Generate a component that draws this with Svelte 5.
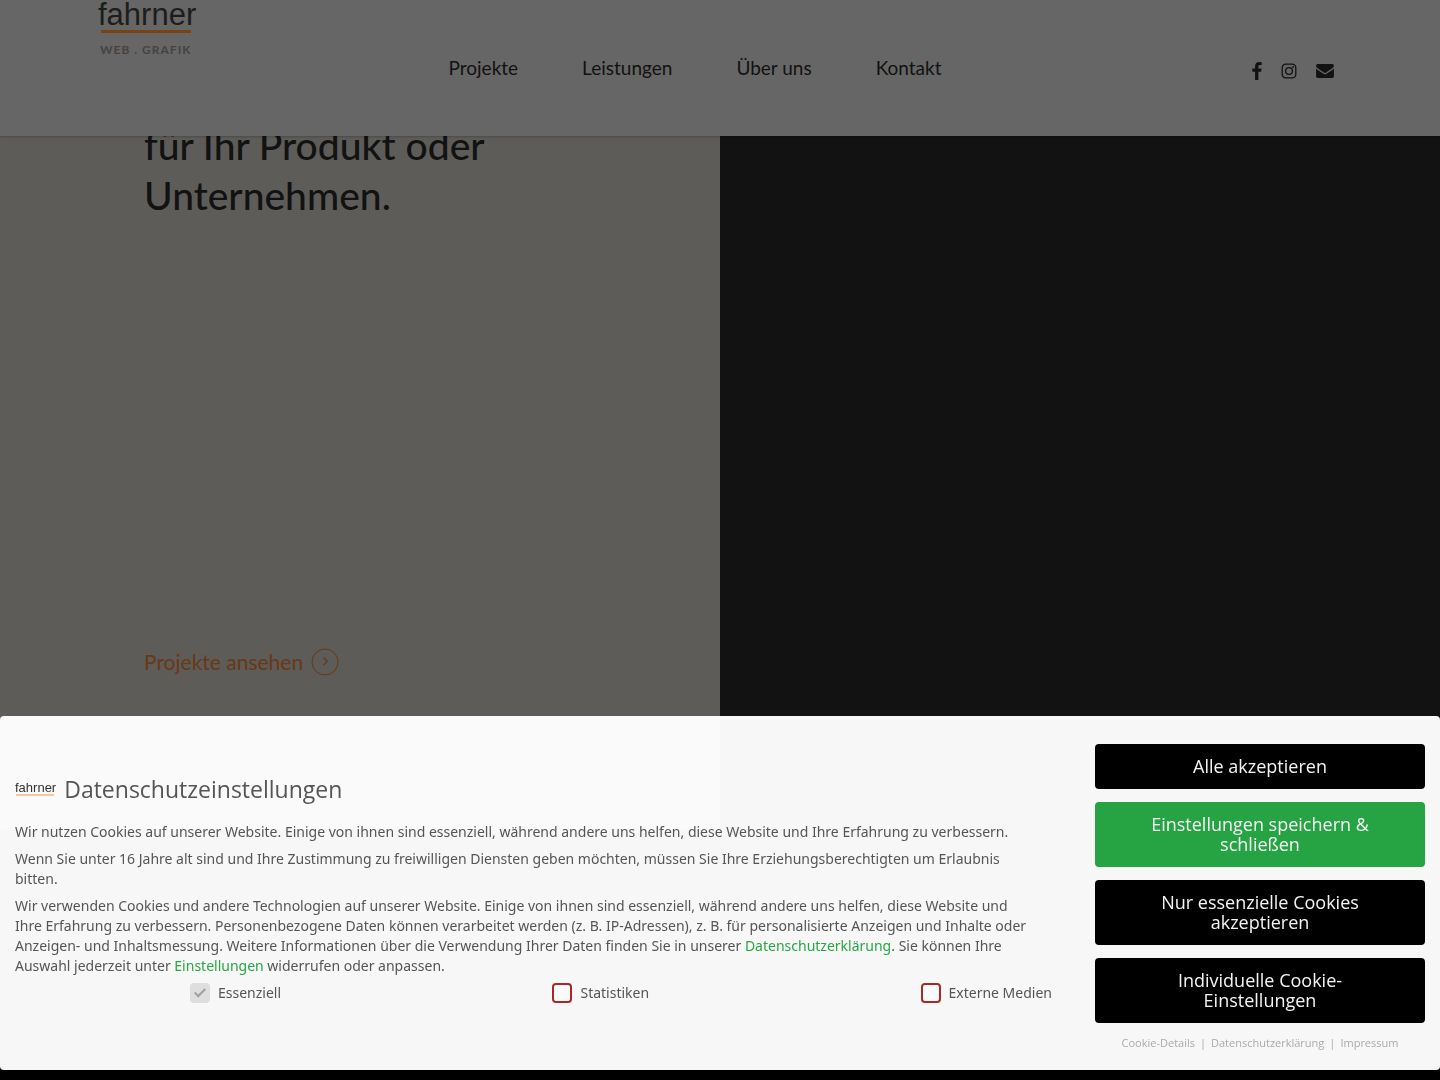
<script>
	const navItems = ["Projekte", "Leistungen", "Über uns", "Kontakt"];

	const actions = [
		{ label: "Alle akzeptieren" },
		{ label: "Einstellungen speichern & schließen", primary: true },
		{ label: "Nur essenzielle Cookies akzeptieren" },
		{ label: "Individuelle Cookie-Einstellungen" },
	];

	const legalLinks = ["Cookie-Details", "Datenschutzerklärung", "Impressum"];

	let groups = [
		{ id: "essential", label: "Essenziell", checked: true, disabled: true },
		{ id: "statistics", label: "Statistiken", checked: false, disabled: false },
		{ id: "external-media", label: "Externe Medien", checked: false, disabled: false },
	];
</script>

<header class="Header">
	<a class="Logo" href="#start">
		<span class="Logo-name">fahrner</span>
		<span class="Logo-claim">WEB . GRAFIK</span>
	</a>

	<nav class="Nav">
		{#each navItems as item}
			<a class="Nav-link" href="#{item}">{item}</a>
		{/each}
	</nav>

	<div class="Social">
		<a href="#facebook" aria-label="Facebook">
			<svg width="10" height="18" viewBox="479 0 864 1664">
				<path
					d="M1343 12v264h-157q-86 0-116 36t-30 108v189h293l-39 296h-254v759h-306v-759h-255v-296h255v-218q0-186 104-288.5t277-102.5q147 0 228 12z"
				/>
			</svg>
		</a>
		<a href="#instagram" aria-label="Instagram">
			<svg width="16" height="16" viewBox="0 0 16 16">
				<rect class="Social-stroke" x="1.2" y="1.2" width="13.6" height="13.6" rx="3.6" />
				<circle class="Social-stroke" cx="8" cy="8" r="3.4" />
				<circle cx="12" cy="4" r="0.9" />
			</svg>
		</a>
		<a href="#mail" aria-label="E-Mail">
			<svg width="18" height="14" viewBox="0 256 1792 1408">
				<path
					d="M1792 710v794q0 66-47 113t-113 47h-1472q-66 0-113-47t-47-113v-794q44 49 101 87 362 246 497 345 57 42 92.5 65.5t94.5 48 110 24.5h2q51 0 110-24.5t94.5-48 92.5-65.5q170-123 498-345 57-39 100-87zm0-294q0 79-49 151t-122 123q-376 261-468 325-10 7-42.5 31t-54 38.5-52 32.5-57.5 27-50 9h-2q-23 0-50-9t-57.5-27-52-32.5-54-38.5-42.5-31q-91-64-262-182.5t-205-142.5q-62-42-117-115.5t-55-136.5q0-78 41.5-130t118.5-52h1472q65 0 112.5 47t47.5 113z"
				/>
			</svg>
		</a>
	</div>
</header>

<main class="Hero">
	<section class="Hero-intro">
		<h1 class="Hero-title">für Ihr Produkt oder Unternehmen.</h1>
		<a class="Hero-link" href="#projekte">
			Projekte ansehen
			<svg width="28" height="28" viewBox="0 0 28 28">
				<circle cx="14" cy="14" r="13" />
				<path d="M12.5 9.5l3.8 3.8-3.8 3.8" />
			</svg>
		</a>
	</section>
	<section class="Hero-media"></section>
</main>

<div class="Cookie" role="dialog" aria-labelledby="cookie-title">
	<div class="Cookie-content">
		<div class="Cookie-head">
			<span class="Cookie-logo">fahrner</span>
			<h2 class="Cookie-title" id="cookie-title">Datenschutzeinstellungen</h2>
		</div>

		<p>
			Wir nutzen Cookies auf unserer Website. Einige von ihnen sind essenziell, während andere uns
			helfen, diese Website und Ihre Erfahrung zu verbessern.
		</p>
		<p>
			Wenn Sie unter 16 Jahre alt sind und Ihre Zustimmung zu freiwilligen Diensten geben möchten,
			müssen Sie Ihre Erziehungsberechtigten um Erlaubnis bitten.
		</p>
		<p>
			Wir verwenden Cookies und andere Technologien auf unserer Website. Einige von ihnen sind
			essenziell, während andere uns helfen, diese Website und Ihre Erfahrung zu verbessern.
			Personenbezogene Daten können verarbeitet werden (z. B. IP-Adressen), z. B. für
			personalisierte Anzeigen und Inhalte oder Anzeigen- und Inhaltsmessung. Weitere
			Informationen über die Verwendung Ihrer Daten finden Sie in unserer
			<a href="#datenschutz">Datenschutzerklärung</a>. Sie können Ihre Auswahl jederzeit unter
			<a href="#einstellungen">Einstellungen</a> widerrufen oder anpassen.
		</p>

		<div class="Cookie-groups">
			{#each groups as group}
				<label class="Group" for={group.id}>
					<input
						class="Group-box"
						type="checkbox"
						id={group.id}
						bind:checked={group.checked}
						disabled={group.disabled}
					/>
					{group.label}
				</label>
			{/each}
		</div>
	</div>

	<div class="Cookie-actions">
		{#each actions as action}
			<button class="Button" class:Button--primary={action.primary} type="button">
				{action.label}
			</button>
		{/each}

		<div class="Legal">
			{#each legalLinks as link, i}
				{#if i > 0}<span>|</span>{/if}
				<a href="#{link}">{link}</a>
			{/each}
		</div>
	</div>
</div>

<style>
	:global(body) {
		background: #000;
		font-family: Lato, sans-serif;
		color: #121212;
	}

	a {
		color: inherit;
		text-decoration: none;
	}

	.Header {
		position: relative;
		display: grid;
		grid-template-columns: 1fr auto 1fr;
		align-items: center;
		box-sizing: border-box;
		height: 136px;
		padding: 0 106px 0 98px;
		background: #666;
		box-shadow: 0 1px 2px rgba(0, 0, 0, 0.2);
	}

	.Logo {
		display: flex;
		flex-direction: column;
		align-items: flex-start;
		align-self: start;
		gap: 11px;
	}

	.Logo-name {
		font: 31px/30px "Liberation Sans", sans-serif;
		color: #1d1d1b;
	}

	.Logo-name::after {
		content: "";
		display: block;
		height: 3px;
		margin: 0 5px 0 3px;
		background: #7a4312;
	}

	.Logo-claim {
		padding-left: 2px;
		font-size: 12px;
		line-height: 12px;
		font-weight: 700;
		letter-spacing: 1px;
		color: #464241;
	}

	.Nav {
		display: flex;
		gap: 64px;
		padding-right: 42px;
		font-size: 19px;
		line-height: 24px;
	}

	.Social {
		display: flex;
		align-items: center;
		justify-content: flex-end;
		gap: 19px;
		padding-top: 5px;
	}

	.Social a,
	.Social svg {
		display: block;
	}

	.Social svg {
		fill: #121212;
	}

	.Social .Social-stroke {
		fill: none;
		stroke: #121212;
		stroke-width: 1.3;
	}

	.Hero {
		display: grid;
		grid-template-columns: 1fr 1fr;
		height: 694px;
	}

	.Hero-intro {
		display: flex;
		flex-direction: column;
		justify-content: space-between;
		align-items: flex-start;
		overflow: hidden;
		box-sizing: border-box;
		padding: 0 20% 154px;
		background: #5d5c59;
	}

	.Hero-title {
		margin: -16px 0 0;
		font-size: 39px;
		line-height: 50px;
		font-weight: 500;
	}

	.Hero-link {
		display: flex;
		align-items: center;
		gap: 8px;
		font-size: 21px;
		line-height: 28px;
		white-space: nowrap;
		color: #693814;
	}

	.Hero-link svg {
		fill: none;
		stroke: #693814;
	}

	.Hero-link path {
		stroke-width: 1.3;
	}

	.Hero-media {
		background: #121212;
	}

	.Cookie {
		position: fixed;
		inset: auto 0 10px;
		display: grid;
		grid-template-columns: 3fr 1fr;
		align-items: center;
		border-radius: 4px;
		background: rgba(255, 255, 255, 0.97);
		font-family: "Open Sans", sans-serif;
		font-size: 14px;
		line-height: 20px;
		color: #555;
	}

	.Cookie-content {
		padding: 0 15px 11px;
	}

	.Cookie-head {
		display: flex;
		align-items: center;
		gap: 8px;
		margin-bottom: 17px;
	}

	.Cookie-logo {
		font: 13px/12px "Liberation Sans", sans-serif;
		color: #333;
	}

	.Cookie-logo::after {
		content: "";
		display: block;
		height: 2px;
		margin: 0 2px 0 1px;
		background: #f9c79d;
	}

	.Cookie-title {
		margin: 0;
		font-size: 23px;
		line-height: 32px;
		font-weight: 400;
	}

	p {
		margin: 0 0 7px;
		padding-right: 32px;
		font-family: "Noto Sans", sans-serif;
	}

	p a {
		color: #28a745;
	}

	.Cookie-groups {
		display: flex;
		justify-content: space-between;
		padding: 0 13px 0 175px;
		font-family: "Noto Sans", sans-serif;
	}

	.Group {
		display: flex;
		align-items: center;
		gap: 8px;
	}

	.Group-box {
		appearance: none;
		display: grid;
		place-items: center;
		box-sizing: border-box;
		width: 20px;
		height: 20px;
		margin: 0;
		border: 2px solid #a72828;
		border-radius: 4px;
		background: #fafafa;
	}

	.Group-box:disabled {
		border-color: #dedede;
		background: #dedede;
	}

	.Group-box:checked::after {
		content: "";
		width: 4px;
		height: 9px;
		border: solid #a0a0a0;
		border-width: 0 2px 2px 0;
		transform: translateY(-1px) rotate(45deg);
	}

	.Cookie-actions {
		display: flex;
		flex-direction: column;
		gap: 13px;
		padding: 28px 15px 20px;
	}

	.Button {
		padding: 12px 40px 13px;
		border: 0;
		border-radius: 4px;
		background: #000;
		font: inherit;
		font-size: 18px;
		line-height: 20px;
		color: #f4f4f4;
	}

	.Button--primary {
		background: #26a343;
	}

	.Legal {
		display: flex;
		justify-content: center;
		gap: 5px;
		font-size: 11px;
		line-height: 14px;
		color: #aaa;
	}
</style>
